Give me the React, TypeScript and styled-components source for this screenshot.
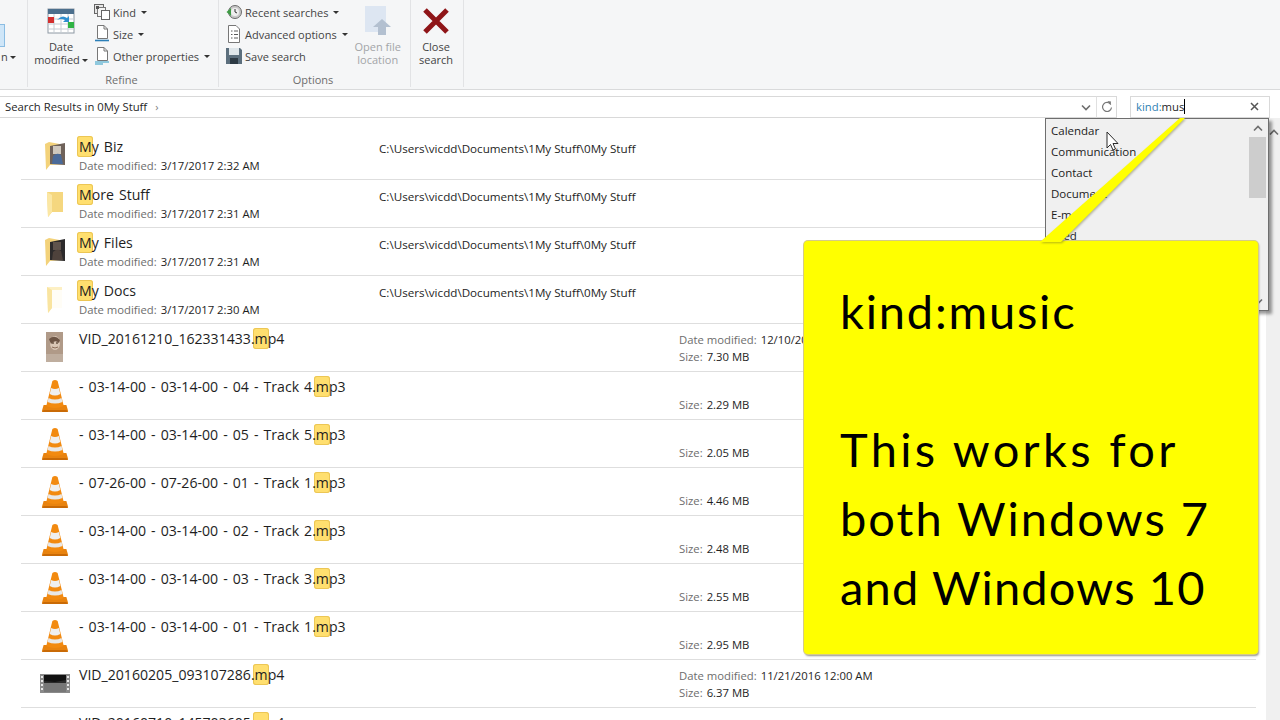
import React from "react"
import styled, { createGlobalStyle } from "styled-components"

const uiFont = `"Open Sans", "Noto Sans", sans-serif`

const GlobalStyle = createGlobalStyle`
  html, body {
    margin: 0;
    height: 720px;
    overflow: hidden;
    background: #ffffff;
    font-family: ${uiFont};
  }
`

type IconKind = "biz" | "stuff" | "files" | "docs" | "clip" | "vlc" | "film"

type ResultRow = {
  icon: IconKind
  before: string
  hit: string
  after: string
  path?: string
  date?: string
  modified?: string
  size?: string
}

const folderPath = "C:\\Users\\vicdd\\Documents\\1My Stuff\\0My Stuff"

const rows: ResultRow[] = [
  { icon: "biz", before: "", hit: "M", after: "y Biz", date: "3/17/2017 2:32 AM", path: folderPath },
  { icon: "stuff", before: "", hit: "M", after: "ore Stuff", date: "3/17/2017 2:31 AM", path: folderPath },
  { icon: "files", before: "", hit: "M", after: "y Files", date: "3/17/2017 2:31 AM", path: folderPath },
  { icon: "docs", before: "", hit: "M", after: "y Docs", date: "3/17/2017 2:30 AM", path: folderPath },
  { icon: "clip", before: "VID_20161210_162331433.", hit: "m", after: "p4", modified: "12/10/2016 12:00 AM", size: "7.30 MB" },
  { icon: "vlc", before: "- 03-14-00 - 03-14-00 - 04 - Track 4.", hit: "m", after: "p3", size: "2.29 MB" },
  { icon: "vlc", before: "- 03-14-00 - 03-14-00 - 05 - Track 5.", hit: "m", after: "p3", size: "2.05 MB" },
  { icon: "vlc", before: "- 07-26-00 - 07-26-00 - 01 - Track 1.", hit: "m", after: "p3", size: "4.46 MB" },
  { icon: "vlc", before: "- 03-14-00 - 03-14-00 - 02 - Track 2.", hit: "m", after: "p3", size: "2.48 MB" },
  { icon: "vlc", before: "- 03-14-00 - 03-14-00 - 03 - Track 3.", hit: "m", after: "p3", size: "2.55 MB" },
  { icon: "vlc", before: "- 03-14-00 - 03-14-00 - 01 - Track 1.", hit: "m", after: "p3", size: "2.95 MB" },
  { icon: "film", before: "VID_20160205_093107286.", hit: "m", after: "p4", modified: "11/21/2016 12:00 AM", size: "6.37 MB" },
  { icon: "film", before: "VID_20160710_145703605.", hit: "m", after: "p4" },
]

const suggestions = ["Calendar", "Communication", "Contact", "Document", "E-mail", "Feed"]

function FileIcon({ kind }: { kind: IconKind }) {
  if (kind === "vlc") {
    return (
      <svg width="28" height="34" viewBox="0 0 32 34" preserveAspectRatio="none">
        <path d="M3 26 L1 32 Q1 33 3 33 L29 33 Q31 33 31 32 L29 26 Z" fill="#e8830f" />
        <path d="M3 31 H29 L31 33 H1 Z" fill="#c96a06" />
        <path d="M13 2 Q16 0 19 2 L26 27 Q16 31 6 27 Z" fill="#f28a10" />
        <path d="M11.5 9 Q16 11 20.5 9 L22 15 Q16 18 10 15 Z" fill="#efefef" />
        <path d="M8.5 19 Q16 22 23.5 19 L24.5 23 Q16 26 7.5 23 Z" fill="#e8e8e8" />
      </svg>
    )
  }
  if (kind === "film") {
    return (
      <svg width="32" height="32" viewBox="0 0 32 32">
        <rect x="1" y="6" width="30" height="19" fill="#8a8a8a" />
        <rect x="5" y="7" width="22" height="8" fill="#111111" />
        <rect x="5" y="15" width="22" height="9" fill="#777777" />
        <path d="M5 13 L16 14 L27 12 V15 H5 Z" fill="#2a2a2a" />
        {[8, 12, 16, 20].map((y) => (
          <g key={y} fill="#e8e8e8">
            <rect x="2" y={y} width="2" height="2" />
            <rect x="28" y={y} width="2" height="2" />
          </g>
        ))}
      </svg>
    )
  }
  if (kind === "clip") {
    return (
      <svg width="32" height="32" viewBox="0 0 32 32">
        <rect x="7" y="0" width="17" height="30" fill="#b09a88" />
        <rect x="7" y="22" width="17" height="8" fill="#bfae9f" />
        <ellipse cx="16" cy="11" rx="5" ry="7" fill="#d9c6b5" />
        <path d="M10 7 Q16 2 21 8 L20 11 Q16 7 12 12 Z" fill="#6d5545" />
        <circle cx="14" cy="11" r="1" fill="#6a5545" />
        <circle cx="18" cy="11" r="1" fill="#6a5545" />
        <path d="M13 15 Q16 17 19 15" stroke="#8a6c58" fill="none" />
      </svg>
    )
  }
  if (kind === "stuff") {
    return (
      <svg width="32" height="32" viewBox="0 0 32 32">
        <path d="M8 4 L24 4 V24 L13 24 L9 29 Z" fill="#f5d77f" />
        <path d="M8 4 L13 7 V24 L9 29 Z" fill="#fbe7a4" />
      </svg>
    )
  }
  if (kind === "docs") {
    return (
      <svg width="32" height="32" viewBox="0 0 32 32">
        <path d="M8 3 L23 3 V24 L13 24 L9 29 Z" fill="#fdf0c4" />
        <rect x="13" y="6" width="10" height="18" fill="#fffdf6" />
        <path d="M8 3 L13 6 V24 L9 29 Z" fill="#f9e4a0" />
      </svg>
    )
  }
  const dark = kind === "files"
  return (
    <svg width="32" height="32" viewBox="0 0 32 32">
      <path d="M6 4 L10 2 L26 5 V24 L11 25 L7 30 Z" fill="#f3d27a" />
      <path d="M11 6 L26 3 V25 L11 24 Z" fill={dark ? "#2c2a2b" : "#6f625a"} />
      <rect x="14" y="6" width="8" height="8" fill={dark ? "#5f534c" : "#cfc8bd"} />
      <path d="M14 16 Q18 12 22 15 L24 24 L13 24 Z" fill={dark ? "#4e423c" : "#4a6a99"} />
    </svg>
  )
}

const CalendarIcon = () => (
  <svg width="28" height="26" viewBox="0 0 28 26">
    <rect x="1" y="1" width="26" height="24" fill="#ffffff" stroke="#8d98a3" />
    <rect x="1" y="1" width="26" height="5" fill="#4c6f8d" />
    <path d="M1 11H27M1 16H27M1 21H27M7 6V25M14 6V25M21 6V25" stroke="#c5ccd3" strokeWidth="1" />
    <rect x="1" y="9" width="6" height="6" fill="#d3302f" />
    <rect x="21" y="14" width="6" height="6" fill="#2fb344" />
    <path d="M10 12 Q15 6 20 10 L22 8 V14 H16 L18 12 Q14 10 10 12 Z" fill="#2f8fd0" />
  </svg>
)

const KindIcon = () => (
  <svg width="16" height="16" viewBox="0 0 16 16">
    <rect x="0.5" y="0.5" width="9" height="9" fill="#e7e7e7" stroke="#666" />
    <rect x="3.5" y="3.5" width="8" height="9" fill="#f5f5f5" stroke="#777" />
    <rect x="7.5" y="6.5" width="8" height="9" fill="#ffffff" stroke="#666" />
    <rect x="2" y="2" width="3" height="3" fill="#555" />
  </svg>
)

const SheetIcon = ({ lines }: { lines: number }) => (
  <svg width="16" height="18" viewBox="0 0 16 18">
    <path d="M3.5 0.5 H10 L13.5 4 V13.5 H3.5 Z" fill="#ffffff" stroke="#777" />
    <path d="M10 0.5 V4 H13.5" fill="none" stroke="#777" />
    {lines === 2 ? (
      <path d="M1 15.5 H15" stroke="#2b7fb8" strokeWidth="1.6" />
    ) : (
      <path d="M1 15 H15 M1 17 H9" stroke="#2b9bc4" strokeWidth="1" />
    )}
  </svg>
)

const ClockIcon = () => (
  <svg width="16" height="16" viewBox="0 0 16 16">
    <circle cx="9" cy="8" r="6.5" fill="#c9c9c9" stroke="#6c6c6c" />
    <circle cx="9" cy="8" r="4" fill="#eeeeee" />
    <path d="M9 5V8L11 9" stroke="#333" fill="none" />
    <path d="M0.5 8 L5 4 V12 Z" fill="#3e9b45" />
  </svg>
)

const FormIcon = () => (
  <svg width="16" height="18" viewBox="0 0 16 18">
    <path d="M2.5 0.5 H10 L13.5 4 V17.5 H2.5 Z" fill="#ffffff" stroke="#777" />
    <path d="M5 6H6.5M8 6H12M5 9.5H6.5M8 9.5H12M5 13H6.5M8 13H12" stroke="#5a5a5a" />
  </svg>
)

const FloppyIcon = () => (
  <svg width="16" height="16" viewBox="0 0 16 16">
    <path d="M0 0 H14 L16 2 V16 H0 Z" fill="#5c6f7d" />
    <rect x="3" y="0" width="10" height="7" fill="#dfe6ea" />
    <rect x="4" y="10" width="8" height="6" fill="#2d3a44" />
  </svg>
)

const OpenLocationIcon = () => (
  <svg width="28" height="30" viewBox="0 0 28 30">
    <rect x="1" y="0" width="21" height="26" fill="#dde6f2" />
    <path d="M18 13 L27 21 H22 V29 H14 V21 H9 Z" fill="#b3c0d0" />
  </svg>
)

const RedCross = () => (
  <svg width="28" height="28" viewBox="0 0 28 28">
    <path d="M3 3 L25 25 M25 3 L3 25" stroke="#8f1518" strokeWidth="5" />
  </svg>
)

const Caret = styled.span`
  display: inline-block;
  width: 0;
  height: 0;
  margin-left: 2px;
  vertical-align: 2px;
  border-left: 3px solid transparent;
  border-right: 3px solid transparent;
  border-top: 3px solid #333333;
`

const Page = styled.div`
  position: relative;
  width: 1280px;
  height: 720px;
  overflow: hidden;
  background: #ffffff;
`

const Ribbon = styled.div`
  display: flex;
  height: 89px;
  background: #f5f6f7;
  border-bottom: 1px solid #d9dadb;
  font-size: 11px;
  color: #444444;
`

const Group = styled.div<{ $width: number }>`
  display: flex;
  flex-direction: column;
  flex: none;
  width: ${(p) => p.$width}px;
  height: 87px;
  box-sizing: border-box;
  border-right: 1px solid #e2e3e5;
`

const GroupBody = styled.div<{ $pad?: number }>`
  display: flex;
  flex: 1;
  min-height: 0;
  padding-left: ${(p) => p.$pad ?? 0}px;
`

const GroupLabel = styled.div`
  height: 14px;
  padding-right: 3px;
  line-height: 14px;
  text-align: center;
  color: #6d6d6d;
`

const CutGroup = styled(Group)`
  overflow: hidden;
`

const CutButton = styled.div`
  width: 4px;
  height: 21px;
  margin-top: 24px;
  background: #cfe6f8;
  border: 1px solid #8bbde3;
  border-left: none;
`

const CutText = styled.div`
  margin-top: 50px;
  line-height: 14px;
  white-space: nowrap;
  margin-left: -4px;
`

const LargeButton = styled.div<{ $width: number; $muted?: boolean }>`
  display: flex;
  flex-direction: column;
  align-items: center;
  width: ${(p) => p.$width}px;
  padding-top: 6px;
  line-height: 13px;
  text-align: center;
  color: ${(p) => (p.$muted ? "#a3a5a8" : "#444444")};
`

const LargeIcon = styled.div`
  display: flex;
  align-items: center;
  justify-content: center;
  height: 30px;
  margin-bottom: 4px;
`

const SmallColumn = styled.div`
  display: flex;
  flex-direction: column;
  gap: 4px;
  padding-top: 3px;
`

const SmallButton = styled.div`
  display: flex;
  align-items: center;
  gap: 3px;
  height: 18px;
  white-space: nowrap;
`

const SmallIcon = styled.span`
  display: flex;
  align-items: center;
  justify-content: center;
  width: 16px;
  height: 18px;
`

const AddressRow = styled.div`
  display: flex;
  align-items: stretch;
  height: 22px;
  margin-top: 6px;
  padding-right: 10px;
  font-size: 11.3px;
  color: #1f1f1f;
`

const Breadcrumb = styled.div`
  display: flex;
  flex: 1;
  align-items: center;
  padding: 0 0 2px 5px;
  border-top: 1px solid #d9d9d9;
  border-bottom: 1px solid #d9d9d9;
`

const CrumbArrow = styled.span`
  margin-left: 8px;
  color: #7d7d7d;
  font-size: 11px;
`

const AddressEnd = styled.span`
  margin-left: auto;
  width: 20px;
  padding-top: 3px;
  display: flex;
  align-items: center;
  justify-content: center;
`

const Refresh = styled.div`
  display: flex;
  align-items: center;
  justify-content: center;
  width: 19px;
  border: 1px solid #d9d9d9;
  border-left-color: #e0e0e0;
`

const SearchBox = styled.div`
  display: flex;
  align-items: center;
  width: 140px;
  margin-left: 13px;
  padding: 0 10px 1px 5px;
  box-sizing: border-box;
  border: 1px solid #d9d9d9;
`

const SearchKey = styled.span`
  color: #2f7fb3;
`

const TextCaret = styled.span`
  width: 1px;
  height: 15px;
  background: #000000;
`

const ClearX = styled.span`
  margin-left: auto;
  display: flex;
`

const Results = styled.div`
  margin: 14px 0 0 21px;
  width: 1235px;
`

const Row = styled.div`
  display: grid;
  grid-template-columns: 58px 300px 300px 1fr;
  height: 48px;
  box-sizing: border-box;
  border-bottom: 1px solid #dedede;
  color: #1e1e1e;
`

const IconCell = styled.div`
  display: flex;
  align-items: center;
  justify-content: center;
  height: 47px;
  padding-left: 11px;
  padding-right: 2px;
  box-sizing: border-box;
`

const NameCell = styled.div`
  display: flex;
  flex-direction: column;
  padding-top: 4px;
`

const Name = styled.div`
  isolation: isolate;
  height: 21px;
  line-height: 21px;
  font-size: 14.1px;
  word-spacing: 1.4px;
  white-space: nowrap;
`

const Hit = styled.span`
  position: relative;
  z-index: -1;
  display: inline-block;
  margin: 0 -1px 0 -2px;
  padding: 0 1px 0 2px;
  height: 21px;
  vertical-align: top;
  background: #ffdf6f;
  box-shadow: inset 0 0 0 1px #ecc655;
  border-radius: 3px;
`

const Meta = styled.div`
  height: 17px;
  line-height: 17px;
  font-size: 11.3px;
  white-space: nowrap;
`

const MetaKey = styled.span`
  margin-right: 4px;
  color: #6d6d6d;
`

const PathCell = styled.div`
  padding-top: 8px;
  line-height: 17px;
  font-size: 11.65px;
  white-space: nowrap;
`

const DetailCell = styled.div`
  display: flex;
  flex-direction: column;
  padding-top: 7px;
`

const PageScroll = styled.div`
  position: absolute;
  top: 118px;
  right: 0;
  bottom: 0;
  width: 14px;
  background: #f0f0f0;
`

const Dropdown = styled.div`
  position: absolute;
  left: 1045px;
  top: 118px;
  display: flex;
  width: 224px;
  height: 193px;
  box-sizing: border-box;
  background: #f0f0f0;
  border: 1px solid #6e6e6e;
  box-shadow: 3px 3px 3px rgba(0, 0, 0, 0.4);
  font-size: 11.5px;
  color: #1c1c1c;
`

const SuggestList = styled.div`
  flex: 1;
  padding: 1px 0 0 5px;
`

const Suggest = styled.div`
  height: 21px;
  line-height: 21px;
`

const DropScroll = styled.div`
  display: flex;
  flex-direction: column;
  align-items: center;
  width: 17px;
  margin-right: 2px;
  background: #f0f0f0;
`

const ScrollButton = styled.div<{ $bottom?: boolean }>`
  display: flex;
  align-items: center;
  justify-content: center;
  height: 18px;
  margin-top: ${(p) => (p.$bottom ? "auto" : "0")};
`

const ScrollThumb = styled.div`
  width: 100%;
  height: 61px;
  background: #cdcdcd;
`

const Callout = styled.div`
  position: absolute;
  left: 804px;
  top: 241px;
  width: 454px;
  height: 413px;
  box-sizing: border-box;
  padding: 36px 0 0 36px;
  background: #ffff00;
  border-radius: 4px;
  box-shadow: 0 0 0 1px #d6cb85, 1px 2px 2px rgba(60, 60, 40, 0.55);
  font-family: "Lato", "Noto Sans", sans-serif;
  font-size: 47px;
  line-height: 69px;
  color: #000000;
  white-space: nowrap;
`

const CalloutLine = styled.div<{ $spacing?: number }>`
  height: 69px;
  letter-spacing: ${(p) => p.$spacing ?? 1.5}px;
`

const CalloutTail = styled.svg`
  position: absolute;
  left: 236px;
  top: -123px;
  overflow: visible;
  filter: drop-shadow(1px 1px 1px rgba(90, 90, 40, 0.45));
`

const Pointer = styled.svg`
  position: absolute;
  left: 1106px;
  top: 131px;
`

const Chevron = ({ up }: { up?: boolean }) => (
  <svg width="10" height="7" viewBox="0 0 10 7">
    <path d={up ? "M1 5.5 L5 1.5 L9 5.5" : "M1 1.5 L5 5.5 L9 1.5"} fill="none" stroke="#6e6e6e" strokeWidth="1.6" />
  </svg>
)

const PageArrow = styled.div`
  position: absolute;
  top: 11px;
  left: 3px;
  display: flex;
`

function ResultItem({ row }: { row: ResultRow }) {
  return (
    <Row>
      <IconCell>
        <FileIcon kind={row.icon} />
      </IconCell>
      <NameCell>
        <Name>
          {row.before}
          <Hit>{row.hit}</Hit>
          {row.after}
        </Name>
        {row.date && (
          <Meta>
            <MetaKey>Date modified:</MetaKey>
            {row.date}
          </Meta>
        )}
      </NameCell>
      <PathCell>{row.path}</PathCell>
      {row.size && (
        <DetailCell>
          <Meta>
            {row.modified && (
              <>
                <MetaKey>Date modified:</MetaKey>
                {row.modified}
              </>
            )}
          </Meta>
          <Meta>
            <MetaKey>Size:</MetaKey>
            {row.size}
          </Meta>
        </DetailCell>
      )}
    </Row>
  )
}

export default function App() {
  return (
    <Page>
      <GlobalStyle />
      <Ribbon>
        <CutGroup $width={28}>
          <GroupBody>
            <CutButton />
            <CutText>
              n
              <Caret />
            </CutText>
          </GroupBody>
        </CutGroup>
        <Group $width={191}>
          <GroupBody>
            <LargeButton $width={66}>
              <LargeIcon>
                <CalendarIcon />
              </LargeIcon>
              <span>Date</span>
              <span>
                modified
                <Caret />
              </span>
            </LargeButton>
            <SmallColumn>
              <SmallButton>
                <SmallIcon>
                  <KindIcon />
                </SmallIcon>
                Kind
                <Caret />
              </SmallButton>
              <SmallButton>
                <SmallIcon>
                  <SheetIcon lines={2} />
                </SmallIcon>
                Size
                <Caret />
              </SmallButton>
              <SmallButton>
                <SmallIcon>
                  <SheetIcon lines={3} />
                </SmallIcon>
                Other properties
                <Caret />
              </SmallButton>
            </SmallColumn>
          </GroupBody>
          <GroupLabel>Refine</GroupLabel>
        </Group>
        <Group $width={192}>
          <GroupBody $pad={7}>
            <SmallColumn>
              <SmallButton>
                <SmallIcon>
                  <ClockIcon />
                </SmallIcon>
                Recent searches
                <Caret />
              </SmallButton>
              <SmallButton>
                <SmallIcon>
                  <FormIcon />
                </SmallIcon>
                Advanced options
                <Caret />
              </SmallButton>
              <SmallButton>
                <SmallIcon>
                  <FloppyIcon />
                </SmallIcon>
                Save search
              </SmallButton>
            </SmallColumn>
            <LargeButton $width={60} $muted>
              <LargeIcon>
                <OpenLocationIcon />
              </LargeIcon>
              <span>Open file</span>
              <span>location</span>
            </LargeButton>
          </GroupBody>
          <GroupLabel>Options</GroupLabel>
        </Group>
        <Group $width={53}>
          <GroupBody>
            <LargeButton $width={50}>
              <LargeIcon>
                <RedCross />
              </LargeIcon>
              <span>Close</span>
              <span>search</span>
            </LargeButton>
          </GroupBody>
        </Group>
      </Ribbon>

      <AddressRow>
        <Breadcrumb>
          Search Results in 0My Stuff
          <CrumbArrow>›</CrumbArrow>
          <AddressEnd>
            <Chevron />
          </AddressEnd>
        </Breadcrumb>
        <Refresh>
          <svg width="12" height="12" viewBox="0 0 12 12">
            <path d="M9.8 3.5 A4.5 4.5 0 1 0 10.5 6.5" fill="none" stroke="#777" strokeWidth="1.2" />
            <path d="M6.5 0 L10 0.5 L9.5 4 Z" fill="#777" />
          </svg>
        </Refresh>
        <SearchBox>
          <SearchKey>kind:</SearchKey>mus
          <TextCaret />
          <ClearX>
            <svg width="9" height="9" viewBox="0 0 9 9">
              <path d="M1 1 L8 8 M8 1 L1 8" stroke="#555" strokeWidth="1.5" />
            </svg>
          </ClearX>
        </SearchBox>
      </AddressRow>

      <Results>
        {rows.map((row) => (
          <ResultItem key={row.before + row.after + (row.date ?? "") + (row.size ?? "")} row={row} />
        ))}
      </Results>

      <PageScroll>
        <PageArrow>
          <Chevron up />
        </PageArrow>
      </PageScroll>

      <Dropdown>
        <SuggestList>
          {suggestions.map((item) => (
            <Suggest key={item}>{item}</Suggest>
          ))}
        </SuggestList>
        <DropScroll>
          <ScrollButton>
            <Chevron up />
          </ScrollButton>
          <ScrollThumb />
          <ScrollButton $bottom>
            <Chevron />
          </ScrollButton>
        </DropScroll>
      </Dropdown>

      <Pointer width="14" height="22" viewBox="0 0 14 22">
        <path d="M1 1 V17 L4.5 13.5 L7 19 L9.5 18 L7 12.5 H12 Z" fill="#ffffff" stroke="#2b2b2b" strokeWidth="1" />
      </Pointer>

      <Callout>
        <CalloutTail width="146" height="124" viewBox="0 0 146 124">
          <path d="M140 0 L0 124 L21 124 L145 0 Z" fill="#ffff00" />
        </CalloutTail>
        <CalloutLine $spacing={1.8}>kind:music</CalloutLine>
        <CalloutLine />
        <CalloutLine $spacing={3.3}>This works for</CalloutLine>
        <CalloutLine $spacing={2}>both Windows 7</CalloutLine>
        <CalloutLine $spacing={1.15}>and Windows 10</CalloutLine>
      </Callout>
    </Page>
  )
}
